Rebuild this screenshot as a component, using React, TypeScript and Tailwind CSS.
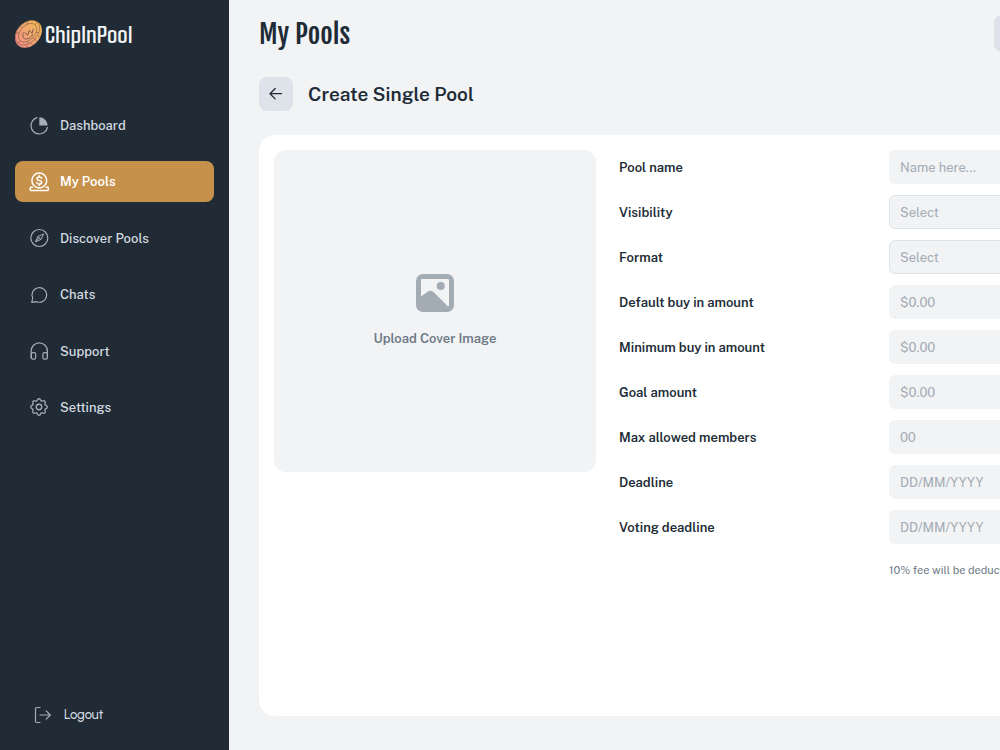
import type { ReactNode } from "react";
import { TbSettings } from "react-icons/tb";

function CoinLogo() {
  return (
    <svg viewBox="0 0 30 30" className="size-[30px] shrink-0" aria-hidden="true">
      <defs>
        <linearGradient id="coin" gradientUnits="userSpaceOnUse" x1="2" y1="26" x2="26" y2="4">
          <stop offset="0" stopColor="#f58a86" />
          <stop offset="0.5" stopColor="#f0a770" />
          <stop offset="1" stopColor="#f2b955" />
        </linearGradient>
        <clipPath id="coin-shape">
          <ellipse cx="13.400" cy="14" rx="15.400" ry="11.600" transform="rotate(-47 13.400 14)" />
        </clipPath>
      </defs>
      <g clipPath="url(#coin-shape)">
        <rect width="30" height="30" fill="url(#coin)" />
        <g transform="rotate(-47 13.400 14)" fill="none" stroke="#8a5c4a" strokeWidth="0.6">
          <ellipse cx="13.800" cy="12.500" rx="14.500" ry="9.800" />
          <ellipse cx="13.800" cy="12.500" rx="11" ry="7.200" />
          <path d="M13.800 2.700v2.600M13.800 19.700v2.600M-.7 12.500h3.500M24.800 12.500h3.500M6 4.500l2 2.200M21.600 4.500l-2 2.200M6 20.500l2-2.200M21.600 20.500l-2-2.200M8.500 21.700v3M13.800 22.300v3.300M19 21.700v3M3.500 19.300v3" />
        </g>
        <path d="M8.500 12.500c-1.500 3.500-.3 6.700 3 6.500 2.800-.2 5.200-2.300 6.300-5M9.500 12.500l3.300 2.700 1.300-4.700 3 2.700 1.200-4.500" fill="none" stroke="#6b4942" strokeWidth="0.8" />
      </g>
    </svg>
  );
}

function Icon({ children }: { children: ReactNode }) {
  return (
    <svg
      viewBox="0 0 20 20"
      className="size-5 shrink-0"
      fill="none"
      stroke="currentColor"
      strokeWidth="1.2"
      strokeLinecap="round"
      strokeLinejoin="round"
      aria-hidden="true"
    >
      {children}
    </svg>
  );
}

const navItems: { label: string; icon: ReactNode; active?: boolean }[] = [
  {
    label: "Dashboard",
    icon: (
      <Icon>
        <path d="M8 1.700A8.300 8.300 0 1 0 18.400 11.500" />
        <path d="M10.300 1.200a8.400 8.400 0 0 1 8.400 8.400h-8.400z" fill="currentColor" stroke="none" />
      </Icon>
    ),
  },
  {
    label: "My Pools",
    active: true,
    icon: (
      <Icon>
        <g strokeWidth="1.500">
          <circle cx="10.300" cy="8.500" r="7.400" />
          <path d="M12.700 6.400c-.3-1-1.200-1.400-2.400-1.400-1.400 0-2.400.6-2.400 1.700 0 2.400 4.900 1.100 4.900 3.600 0 1.100-1.100 1.800-2.500 1.800-1.300 0-2.300-.5-2.600-1.500M10.300 3.700V5M10.300 12.100v1.300" />
          <path d="M3.300 15.200H2c-.5 0-.8.300-.8.800v1.400c0 .7.500 1.200 1.200 1.200h15.800c.7 0 1.200-.5 1.200-1.200V16c0-.5-.3-.8-.8-.8h-1.300" />
        </g>
      </Icon>
    ),
  },
  {
    label: "Discover Pools",
    icon: (
      <Icon>
        <circle cx="10.300" cy="10" r="8.500" />
        <path d="M14.200 6.100 9 8.400 6.400 13.900l5.300-2.400zM9.100 8.500l2.500 2.900M6.700 13.600l3.600-3.600" strokeWidth="1" />
      </Icon>
    ),
  },
  {
    label: "Chats",
    icon: (
      <Icon>
        <path d="M2.800 17.400 3.700 13A7.300 7.300 0 1 1 7.600 16.700z" />
      </Icon>
    ),
  },
  {
    label: "Support",
    icon: (
      <Icon>
        <path d="M2.200 16.500V10a8.100 8.100 0 0 1 16.200 0v6.500" />
        <rect x="2.200" y="11.600" width="4.500" height="6.500" rx="1.600" />
        <rect x="13.900" y="11.600" width="4.500" height="6.500" rx="1.600" />
      </Icon>
    ),
  },
  { label: "Settings", icon: <TbSettings className="-mx-px size-[22px] shrink-0 stroke-[1.4]" aria-hidden="true" /> },
];

type Field = { id: string; label: string; placeholder: string; select?: boolean };

const fields: Field[] = [
  { id: "pool-name", label: "Pool name", placeholder: "Name here..." },
  { id: "visibility", label: "Visibility", placeholder: "Select", select: true },
  { id: "format", label: "Format", placeholder: "Select", select: true },
  { id: "default-buy-in", label: "Default buy in amount", placeholder: "$0.00" },
  { id: "minimum-buy-in", label: "Minimum buy in amount", placeholder: "$0.00" },
  { id: "goal", label: "Goal amount", placeholder: "$0.00" },
  { id: "max-members", label: "Max allowed members", placeholder: "00" },
  { id: "deadline", label: "Deadline", placeholder: "DD/MM/YYYY" },
  { id: "voting-deadline", label: "Voting deadline", placeholder: "DD/MM/YYYY" },
];

function Sidebar() {
  return (
    <aside className="flex w-[229px] shrink-0 flex-col bg-[#202b35] px-[15px] pt-[19px] pb-[15px] text-[#d5dbe1]">
      <a href="#" className="flex h-8 items-center text-[#f1f3f5]">
        <CoinLogo />
        <span className="font-['Smooch_Sans','Pathway_Gothic_One','Roboto_Condensed',sans-serif] text-[27px] leading-[34px] font-semibold">
          ChipInPool
        </span>
      </a>
      <nav className="mt-[54px] flex h-[323px] flex-col justify-between">
        {navItems.map((item) => (
          <a
            key={item.label}
            href="#"
            className={
              item.active
                ? "flex h-[41px] items-center gap-[11px] rounded-lg bg-[#c6924b] px-[14px] text-[13px] leading-[21px] font-semibold text-white"
                : "flex h-[41px] items-center gap-[11px] rounded-lg px-[14px] text-[13px] leading-[21px] font-medium"
            }
          >
            <span className={item.active ? "flex" : "flex text-[#a5adb6]"}>{item.icon}</span>
            {item.label}
          </a>
        ))}
      </nav>
      <button
        type="button"
        className="mt-auto flex h-[40px] items-center gap-[11px] px-[18px] font-['Urbanist','Outfit','Public_Sans',sans-serif] text-[13px] leading-5 font-medium"
      >
        <span className="flex text-[#a5adb6]">
          <Icon>
            <path d="M7 2.500H4a1.500 1.500 0 0 0-1.500 1.500v12A1.500 1.500 0 0 0 4 17.500h3M7 10h10.200M13.200 5.900l4.100 4.100-4.100 4.100" />
          </Icon>
        </span>
        Logout
      </button>
    </aside>
  );
}

export default function App() {
  return (
    <div className="flex min-h-screen overflow-x-hidden bg-[#f1f3f5] font-['Public_Sans',Inter,sans-serif] text-[#202b35]">
      <Sidebar />
      <main className="flex min-w-[1091px] flex-1 flex-col px-[30px] pt-[15px] pb-[34px]">
        <header className="flex h-[37px] items-center justify-between">
          <h1 className="font-['Fjalla_One','Roboto_Condensed',sans-serif] text-[27px] leading-[38px] font-normal">
            My Pools
          </h1>
          <button
            type="button"
            aria-label="Account menu"
            className="h-[37px] w-[296px] rounded-lg bg-[#dee3ea]"
          />
        </header>
        <div className="mt-[25px] flex items-center gap-[15px]">
          <button
            type="button"
            aria-label="Back"
            className="flex size-[34px] items-center justify-center rounded-lg bg-[#dee3ea]"
          >
            <svg
              viewBox="0 0 16 16"
              className="size-4"
              fill="none"
              stroke="currentColor"
              strokeWidth="1.3"
              strokeLinecap="round"
              strokeLinejoin="round"
              aria-hidden="true"
            >
              <path d="M13.500 7.700H2.200M7.200 2.500 2 7.700l5.200 5.200" />
            </svg>
          </button>
          <h2 className="text-[19px] leading-[23px] font-semibold">Create Single Pool</h2>
        </div>
        <form className="mt-6 flex flex-1 items-start gap-[23px] rounded-2xl bg-white p-[15px]">
          <button
            type="button"
            className="flex h-[322px] w-[322px] shrink-0 flex-col items-center justify-center gap-[17px] rounded-xl bg-[#f1f3f5] text-[#6d7986]"
          >
            <svg viewBox="0 0 38 38" className="size-[38px] text-[#a3abb4]" fill="currentColor" aria-hidden="true">
              <path
                fillRule="evenodd"
                d="M7 0h24a7 7 0 0 1 7 7v24a7 7 0 0 1-7 7H7a7 7 0 0 1-7-7V7a7 7 0 0 1 7-7zM6.500 5C5.500 5 5 5.500 5 6.500V22.500l6.200-4.600c2.200-1.600 4.600-1.600 6.600.4L32 32.500c.7-.2 1-.7 1-1.500V6.500C33 5.500 32.500 5 31.500 5z"
              />
              <circle cx="24.700" cy="12" r="4" />
            </svg>
            <span className="text-[13px] leading-5 font-semibold">Upload Cover Image</span>
          </button>
          <div className="flex flex-1 flex-col gap-[11px]">
            {fields.map((field) => (
              <div key={field.id} className="flex items-center">
                <label htmlFor={field.id} className="w-[270px] shrink-0 text-[13px] leading-[21px] font-semibold">
                  {field.label}
                </label>
                {field.select ? (
                  <select
                    id={field.id}
                    className="h-[34px] min-w-0 flex-1 appearance-none rounded-md border border-[#dee3ea] bg-[#f1f3f5] px-[10px] text-[13px] leading-[21px] text-[#a3abb4]"
                  >
                    <option>{field.placeholder}</option>
                  </select>
                ) : (
                  <input
                    id={field.id}
                    type="text"
                    placeholder={field.placeholder}
                    className="h-[34px] min-w-0 flex-1 rounded-md bg-[#f1f3f5] px-[11px] text-[13px] leading-5 placeholder:text-[#a3abb4]"
                  />
                )}
              </div>
            ))}
            <p className="ml-[270px] pt-[7px] text-[11px] leading-4 text-[#6d7986]">
              10% fee will be deducted
            </p>
          </div>
        </form>
      </main>
    </div>
  );
}
